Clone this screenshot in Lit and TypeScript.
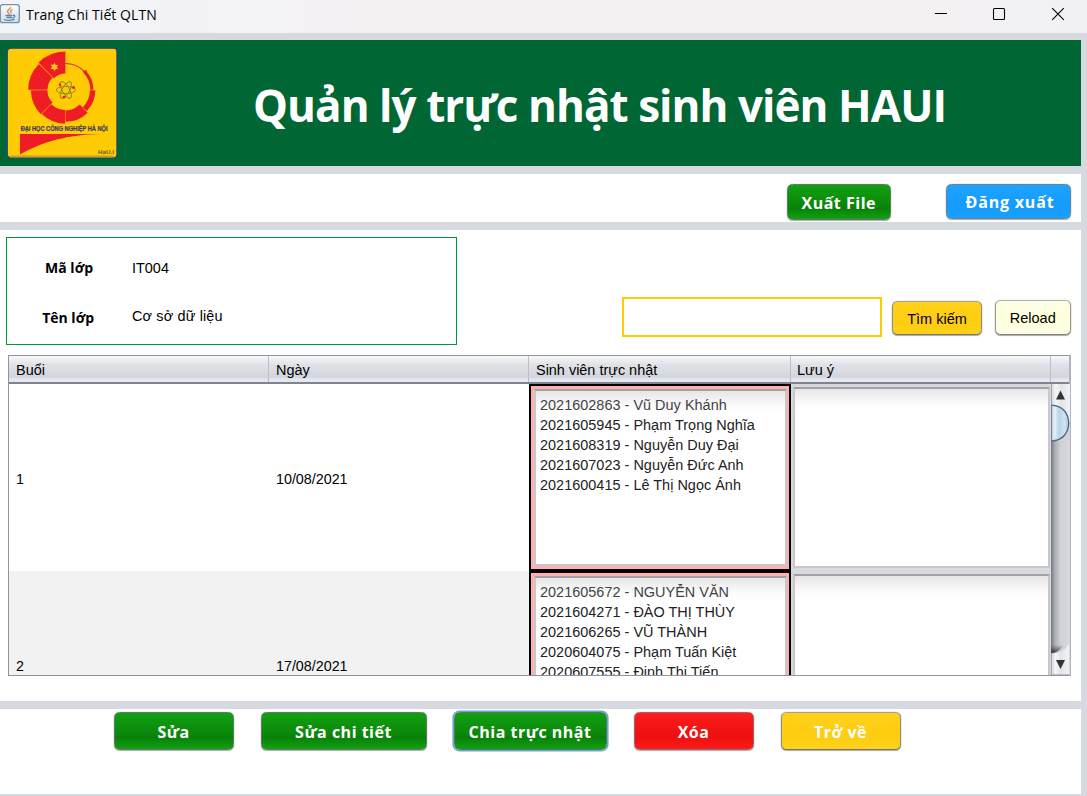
import { LitElement, html, svg, css } from "lit";
import { customElement, property } from "lit/decorators.js";
import { classMap } from "lit/directives/class-map.js";

interface Session {
  no: string;
  date: string;
  students: string[];
}

const SESSIONS: Session[] = [
  {
    no: "1",
    date: "10/08/2021",
    students: [
      "2021602863 - Vũ Duy Khánh",
      "2021605945 - Phạm Trọng Nghĩa",
      "2021608319 - Nguyễn Duy Đại",
      "2021607023 - Nguyễn Đức Anh",
      "2021600415 - Lê Thị Ngọc Ánh",
    ],
  },
  {
    no: "2",
    date: "17/08/2021",
    students: [
      "2021605672 - NGUYỄN VĂN",
      "2021604271 - ĐÀO THỊ THÙY",
      "2021606265 - VŨ THÀNH",
      "2020604075 - Phạm Tuấn Kiệt",
      "2020607555 - Đinh Thị Tiến",
    ],
  },
];

// Ring segment between two angles (degrees, counter-clockwise) around the logo centre.
const ring = (a0: number, a1: number, r0: number, r1: number) => {
  const p = (a: number, r: number) =>
    `${(58.4 + r * Math.cos((a * Math.PI) / 180)).toFixed(2)} ${(42 - r * Math.sin((a * Math.PI) / 180)).toFixed(2)}`;
  return `M${p(a0, r1)}A${r1} ${r1} 0 0 0 ${p(a1, r1)}L${p(a1, r0)}A${r0} ${r0} 0 0 1 ${p(a0, r0)}Z`;
};

const SEGMENTS: [number, number, number, number][] = [
  [90, 134.5, 16.5, 38.4],
  [135.5, 179.5, 18, 37.2],
  [180.5, 224.5, 18, 34.5],
  [225.5, 269.5, 20, 33.7],
  [270.5, 314.5, 20.5, 31.8],
  [315.5, 359.5, 24.5, 30],
  [0.5, 44.5, 25, 28],
  [45.5, 90, 26, 27],
];

@customElement("school-logo")
export class SchoolLogo extends LitElement {
  static styles = css`
    :host { display: block; width: 110px; height: 110px; }
    svg { display: block; overflow: visible; }
    .name { font: bold 6.4px "Liberation Sans", sans-serif; fill: #3a3a60; stroke: #3a3a60; stroke-width: 0.2; }
    .tag { font: bold 6px "Liberation Sans", sans-serif; fill: #6b5d35; }
  `;
  render() {
    return html`<svg width="110" height="110" viewBox="0 0 110 110">
      <rect x="0.3" y="0.3" width="109.6" height="109.4" rx="3.5" fill="#ffcb05" stroke="#2f3b86" stroke-width="1.1" />
      <path d="M3 108.500h104" stroke="#c4a32a" stroke-width="1.8" />
      <g fill="#ee1c25">
        ${SEGMENTS.map((s) => svg`<path d=${ring(...s)} />`)}
        <path d="M75.500 23.500l4-1.500 0 4z" />
        <path d="M13 86H94C60 87 37 93 13 106.5z" />
      </g>
      <path d="M47.5 14.6l1.2 2.3 2.6-.1-1.5 2.1 1.4 2.2-2.6-.1-1.2 2.2-1.1-2.3-2.6 0 1.4-2.1-1.4-2.2 2.6.2z" fill="#fbc21a" />
      <g fill="none" stroke="#7c7a28" stroke-width="0.8">
        <ellipse cx="58.8" cy="42" rx="9.5" ry="3.6" />
        <ellipse cx="58.8" cy="42" rx="9.5" ry="3.6" transform="rotate(60 58.8 42)" />
        <ellipse cx="58.8" cy="42" rx="9.5" ry="3.6" transform="rotate(120 58.8 42)" />
      </g>
      <g fill="#ee1c25">
        <circle cx="53" cy="36.8" r="1.3" /><circle cx="66.5" cy="39.5" r="1.4" /><circle cx="57" cy="49.2" r="1.4" />
      </g>
      <text class="name" x="13.7" y="83.4" textLength="86.8" lengthAdjust="spacingAndGlyphs">ĐẠI HỌC CÔNG NGHIỆP HÀ NỘI</text>
      <text class="tag" x="91" y="106" textLength="16" lengthAdjust="spacingAndGlyphs">HaU.I</text>
    </svg>`;
  }
}

@customElement("glass-button")
export class GlassButton extends LitElement {
  @property() tone = "green";
  @property({ type: Boolean }) focused = false;
  @property({ type: Boolean }) plain = false;
  static styles = css`
    :host { display: block; }
    button {
      display: block; width: 100%; height: 100%; box-sizing: border-box; padding: 1px 0 0;
      border: 1.5px solid #7c8a7d; border-radius: 5.5px; margin: 0;
      box-shadow: 0 0 1px #888, 0 1px 1px rgba(60, 60, 60, 0.4);
      font: bold 16px "Open Sans", "Noto Sans", sans-serif; letter-spacing: 0.5px; color: #fff;
      white-space: nowrap;
    }
    .green { background: linear-gradient(#11a011, #0b860b 62%, #088008 68%, #12a212); border-color: #5d7d60; }
    .red { background: linear-gradient(#ff1c1c, #ee1111 60%, #ee1010 68%, #ff1a1a); border-color: #99696b; }
    .blue { background: linear-gradient(#1fa3ff, #149bff 60%, #18a0ff); border-color: #65829b; letter-spacing: 0.8px; padding-left: 3px; }
    .yellow { background: linear-gradient(#ffd21c, #ffcc10 60%, #ffd11a); border-color: #a6a28c #8f8c7c #77746a; }
    .cream { background: linear-gradient(#ffffe6, #ffffdc 60%, #ffffe8); border-color: #b3b3a8 #99998f #82827a; }
    .plain { font: 14.5px "Liberation Sans", Arial, sans-serif; letter-spacing: 0; color: #000; padding: 1px 0 0; }
    .focused { box-shadow: 0 0 0 1.6px #73a4d1; border-color: #4b7a68; }
  `;
  render() {
    return html`<button class=${classMap({ [this.tone]: true, plain: this.plain, focused: this.focused })}><slot></slot></button>`;
  }
}

@customElement("app-root")
export class AppRoot extends LitElement {
  static styles = css`
    :host {
      display: flex; flex-direction: column; width: 1087px; height: 796px; overflow: hidden;
      background: #d6d9e0; color: #000; font: 14.45px "Liberation Sans", Arial, sans-serif;
    }
    * { box-sizing: border-box; }
    .titlebar {
      flex: none; height: 33px; display: flex; align-items: flex-start;
      background: linear-gradient(90deg, #f1f4f8, #f5f1f3 40%, #f5f1f3 80%, #f1f1f3);
    }
    .app-icon { flex: none; margin-top: 4px; }
    .caption { flex: 1; margin-left: 6px; font: 14px/20px "Open Sans", "Noto Sans", sans-serif; padding-top: 5px; letter-spacing: 0.05px; }
    .controls { display: flex; padding: 7px 22px 0 0; gap: 44px; }
    .controls svg:last-child { margin-left: 1px; }
    .panels { flex: none; width: 1081px; height: 763px; padding: 7px 0 2px; display: flex; flex-direction: column; gap: 8px; }
    .banner { flex: none; height: 126px; background: #006633; display: flex; padding: 8px 0 0 7px; }
    h1 { margin: 27px 0 0 136px; color: #fff; font: bold 44px/60px "Open Sans", "Noto Sans", sans-serif; letter-spacing: -0.95px; white-space: nowrap; }
    .toolbar { flex: none; height: 48px; background: #fff; display: flex; padding-top: 10px; }
    .export { width: 103.5px; height: 36px; margin-left: 787px; }
    .logout { width: 125px; height: 35px; margin-left: 55.5px; }
    .main { flex: none; height: 471px; background: #fff; padding: 7px 0 0 6px; }
    .top { display: flex; height: 118px; }
    .info { width: 451px; height: 108px; border: 1px solid #009639; display: grid; grid-template-columns: 93px 1fr; grid-template-rows: 50px 50px; padding: 5px 0 0 32px; line-height: 50px; }
    .info b { width: 54px; text-align: right; font: bold 14px/50px "Open Sans", "Noto Sans", sans-serif; }
    .info .second { line-height: 47px; letter-spacing: 0.15px; }
    .info b.second { width: 55px; line-height: 50px; letter-spacing: 0; }
    .search { width: 260px; height: 40px; margin: 60px 0 0 165px; border: 2px solid #ffcc00; padding: 0 6px; outline: 0; background: #fff; }
    .find { width: 90px; height: 34px; margin: 64px 0 0 10px; }
    .reload { width: 76.5px; height: 35px; margin: 63px 0 0 12.5px; }
    .table { width: 1063px; height: 321px; margin-left: 2px; border: 1px solid #8f949d; border-right: 2px solid #b0b4c0; display: flex; flex-direction: column; }
    .head { flex: none; height: 28px; display: grid; grid-template-columns: 260px 260px 262px 260px 1fr; border-bottom: 2px solid #80848e; background: linear-gradient(#f9f9fb, #dfe1e6 35%, #d9dbe2 60%, #d2d5dd 80%, #e6e8f1 90%, #e6e8f1); }
    .head span { padding: 1px 0 0 7px; line-height: 27px; height: 26px; border-right: 1px solid #bbbec8; }
    .head span:nth-child(4) { padding-left: 6px; }
    .head span:last-child { border-right: 0; }
    .body { flex: 1; min-height: 0; display: flex; }
    .rows { flex: none; width: 1042px; height: 100%; overflow: hidden; }
    .row { height: 187px; display: grid; grid-template-columns: 260px 260px 262px 260px; }
    .row.odd { background: #f2f2f2; }
    .cell { padding-left: 7px; line-height: 190px; height: 187px; font-size: 14.3px; }
    .picked { background: #ffafaf; border: 2px solid #000; padding: 3px 2px 3px 3px; }
    .note { background: #d6d9df; padding: 3px 1px 3px 2px; }
    .area { height: 100%; border: 2px solid #c9c7ca; border-top-color: #a4a1a3; background: linear-gradient(#e6e6e6, #fafafa 14px, #fff 22px); }
    .picked .area { padding: 4px 0 0 4px; line-height: 20px; white-space: nowrap; color: #222; letter-spacing: 0.02px; }
    .area div:first-child { color: #444; }
    .scroll { flex: none; display: block; }
    .footer { flex: none; height: 85px; background: #fff; display: flex; padding: 3px 0 0 113.5px; gap: 27px; }
    .footer glass-button { height: 38px; width: 120px; }
    .footer .detail { width: 166px; }
    .footer .assign { width: 153px; }
  `;

  private renderScrollbar() {
    return html`<svg class="scroll" width="19" height="291" viewBox="0 0 19 291">
      <defs>
        <linearGradient id="track"><stop offset="0" stop-color="#77797f" /><stop offset=".22" stop-color="#aeb0b7" /><stop offset=".5" stop-color="#cfd1d7" /><stop offset="1" stop-color="#d6d8dd" /></linearGradient>
        <linearGradient id="thumb"><stop offset="0" stop-color="#a9bfd4" /><stop offset=".2" stop-color="#e7f0f6" /><stop offset=".45" stop-color="#b9d3e6" /><stop offset=".8" stop-color="#cfe4f0" /><stop offset="1" stop-color="#9fbdd2" /></linearGradient>
        <linearGradient id="btn"><stop offset="0" stop-color="#cfd2d7" /><stop offset=".25" stop-color="#f4f5f7" /><stop offset=".55" stop-color="#e2e4e8" /><stop offset="1" stop-color="#f0f2f5" /></linearGradient>
        <linearGradient id="shade" x2="0" y2="1"><stop offset="0" stop-color="#33353a" stop-opacity="0" /><stop offset="1" stop-color="#222" stop-opacity=".85" /></linearGradient>
      </defs>
      <rect width="19" height="291" fill="url(#track)" />
      <path d="M0 261H13Q7 269 0 269z" fill="url(#shade)" />
      <path d="M0 0H19V38H0z" fill="url(#btn)" />
      <path d="M0 269.500Q13 270 18 259V291H0z" fill="url(#btn)" />
      <path d="M.5 0V21M.5 269.500V291" stroke="#a1a4ab" />
      <path d="M1 290.500H18" stroke="#bbbdc3" />
      <path d="M0 57H18V39H0z" fill="#d3d5da" />
      <path d="M0 21.3Q2 21 3 21.5C12 22.5 17.7 30 17.7 39S12 55.5 4 56.5Q2 57 0 56.7z" fill="url(#thumb)" stroke="#4a6680" stroke-width="1.3" />
      <path d="M9.5 6.5L14 15.5H5z" fill="#333" />
      <path d="M5 276H14L9.500 285z" fill="#333" />
    </svg>`;
  }

  render() {
    return html`
      <header class="titlebar">
        <svg class="app-icon" width="20" height="20" viewBox="0 0 20 20">
          <defs><linearGradient id="g" x2="0" y2="1"><stop offset="0" stop-color="#fdfdfd" /><stop offset="1" stop-color="#cfdbe6" /></linearGradient></defs>
          <rect x=".3" y=".7" width="19" height="18" rx="2.2" fill="url(#g)" stroke="#7d8fa3" stroke-width="1.3" />
          <path d="M10.500 3C11.500 5 7.500 5.500 7.500 7.500 7.500 9 9.500 9.500 9.500 11M12.500 5.500C9.500 7 11 8 11 9.500" fill="none" stroke="#e48a45" stroke-width="1.3" />
          <path d="M5.500 11.500H12.500M6.500 13.500H12M13 11.300C16 11 15 13.500 12.500 14M4 15.500C7 17 12 16.500 14.500 15.200" fill="none" stroke="#5b86ad" stroke-width="1.3" />
        </svg>
        <div class="caption">Trang Chi Tiết QLTN</div>
        <div class="controls">
          <svg width="14" height="14"><path d="M1 6.500H13" stroke="#000" /></svg>
          <svg width="14" height="14"><rect x="1.500" y="1.500" width="11" height="11" rx="1" fill="none" stroke="#000" stroke-width="1.100" /></svg>
          <svg width="14" height="14"><path d="M1.200 1.200L12.800 12.800M12.800 1.200L1.200 12.800" stroke="#000" stroke-width="1.100" /></svg>
        </div>
      </header>
      <div class="panels">
        <section class="banner">
          <school-logo></school-logo>
          <h1>Quản lý trực nhật sinh viên HAUI</h1>
        </section>
        <section class="toolbar">
          <glass-button class="export" tone="green">Xuất File</glass-button>
          <glass-button class="logout" tone="blue">Đăng xuất</glass-button>
        </section>
        <section class="main">
          <div class="top">
            <div class="info">
              <b>Mã lớp</b><span>IT004</span>
              <b class="second">Tên lớp</b><span class="second">Cơ sở dữ liệu</span>
            </div>
            <input class="search" />
            <glass-button class="find" tone="yellow" plain>Tìm kiếm</glass-button>
            <glass-button class="reload" tone="cream" plain>Reload</glass-button>
          </div>
          <div class="table">
            <div class="head"><span>Buổi</span><span>Ngày</span><span>Sinh viên trực nhật</span><span>Lưu ý</span><span></span></div>
            <div class="body">
              <div class="rows">
                ${SESSIONS.map(
                  (s, i) => html`<div class=${classMap({ row: true, odd: i % 2 === 1 })}>
                    <div class="cell">${s.no}</div>
                    <div class="cell">${s.date}</div>
                    <div class="picked"><div class="area">${s.students.map((n) => html`<div>${n}</div>`)}</div></div>
                    <div class="note"><div class="area"></div></div>
                  </div>`
                )}
              </div>
              ${this.renderScrollbar()}
            </div>
          </div>
        </section>
        <section class="footer">
          <glass-button tone="green">Sửa</glass-button>
          <glass-button class="detail" tone="green">Sửa chi tiết</glass-button>
          <glass-button class="assign" tone="green" focused>Chia trực nhật</glass-button>
          <glass-button tone="red">Xóa</glass-button>
          <glass-button tone="yellow">Trở về</glass-button>
        </section>
      </div>
    `;
  }
}
